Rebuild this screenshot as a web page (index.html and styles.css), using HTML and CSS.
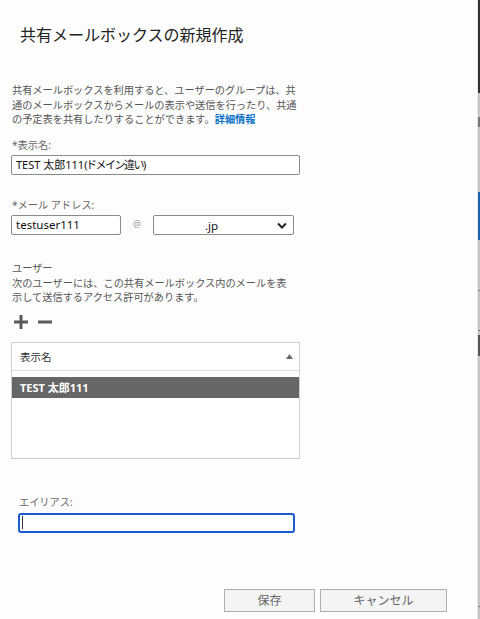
FILE: index.html
```html
<!DOCTYPE html>
<html lang="ja">
<head>
  <meta charset="UTF-8">
  <meta name="viewport" content="width=device-width, initial-scale=1">
  <title>共有メールボックスの新規作成</title>
  <link rel="stylesheet" href="styles.css">
</head>
<body>

  <div class="window">
    <!-- Dialog -->
    <div class="dialog">
      <h1 class="dialog-title">共有メールボックスの新規作成</h1>

      <div class="form">
        <p class="intro">
          共有メールボックスを利用すると、ユーザーのグループは、共<br>
          通のメールボックスからメールの表示や送信を行ったり、共通<br>
          の予定表を共有したりすることができます。<a href="#" class="more">詳細情報</a>
        </p>

        <label class="field-label first">*表示名:</label>
        <div class="text-box wide">TEST 太郎111<span class="narrow">(ドメイン違い)</span></div>

        <label class="field-label gap-email">*メール アドレス:</label>
        <div class="email-row">
          <div class="text-box short">testuser111</div>
          <span class="at">@</span>
          <div class="select-box">
            <span class="domain">.jp</span>
            <svg class="chevron" width="10" height="7" viewBox="0 0 10 7">
              <polyline points="1,1.5 5,5.5 9,1.5" fill="none" stroke="#222" stroke-width="2"/>
            </svg>
          </div>
        </div>

        <div class="users-title">ユーザー</div>
        <p class="users-desc">
          次のユーザーには、この共有メールボックス内のメールを表<br>
          示して送信するアクセス許可があります。
        </p>

        <div class="toolbar">
          <svg width="14" height="14" viewBox="0 0 14 14">
            <rect x="0" y="5.5" width="14" height="3" fill="#5a5a5a"/>
            <rect x="5.5" y="0" width="3" height="14" fill="#5a5a5a"/>
          </svg>
          <svg width="14" height="14" viewBox="0 0 14 14">
            <rect x="0" y="5.5" width="14" height="3" fill="#5a5a5a"/>
          </svg>
        </div>

        <div class="user-list">
          <div class="list-header">
            <span>表示名</span>
            <svg width="7" height="5" viewBox="0 0 7 5">
              <polygon points="0,5 3.5,0 7,5" fill="#6a6a6a"/>
            </svg>
          </div>
          <div class="list-row selected">TEST 太郎111</div>
        </div>

        <div class="alias">
          <label class="field-label">エイリアス:</label>
          <div class="text-box focused"><span class="caret"></span></div>
        </div>
      </div>

      <div class="buttons">
        <button class="btn save">保存</button>
        <button class="btn cancel">キャンセル</button>
      </div>
    </div>

    <!-- edge of the window behind -->
    <div class="edge">
      <div class="seg dark" style="height: 93px"></div>
      <div class="seg" style="height: 24px"></div>
      <div class="seg mid" style="height: 10px"></div>
      <div class="seg" style="height: 65px"></div>
      <div class="seg blue" style="height: 48px"></div>
      <div class="seg" style="height: 50px"></div>
      <div class="seg mid" style="height: 1px"></div>
      <div class="seg" style="height: 39px"></div>
      <div class="seg mid" style="height: 1px"></div>
      <div class="seg" style="height: 4px"></div>
      <div class="seg darkgray" style="height: 21px"></div>
      <div class="seg" style="height: 250px"></div>
      <div class="seg mid" style="height: 1px"></div>
      <div class="seg" style="flex: 1"></div>
    </div>
  </div>

</body>
</html>
```

FILE: styles.css
```css
body {
  margin: 0;
  background: #fff;
  font-family: "Noto Sans", "Noto Sans CJK JP", sans-serif;
  color: #333;
}

.window {
  display: flex;
  width: 480px;
  height: 619px;
}

.dialog {
  flex: 1;
  background: #fdfdfd;
}

/* Title */
.dialog-title {
  margin: 0;
  padding: 25px 0 0 20px;
  font-size: 16px;
  line-height: 20px;
  font-weight: normal;
  color: #222;
}

.form {
  padding-left: 11px;
}

.intro {
  margin: 38px 0 0 1px;
  font-size: 10.2px;
  line-height: 14.7px;
  color: #555;
  white-space: nowrap;
}

.more {
  color: #0a72c8;
  text-decoration: none;
  font-weight: bold;
}

.field-label {
  display: block;
  margin-left: 1px;
  margin-bottom: 2.5px;
  font-size: 10.2px;
  line-height: 15px;
  color: #666;
}

.field-label.first {
  margin-top: 10.5px;
}

.field-label.gap-email {
  margin-top: 22.5px;
}

/* Inputs */
.text-box {
  box-sizing: border-box;
  height: 20px;
  border: 1px solid #8a8a8a;
  border-radius: 2px;
  background: #fff;
  padding: 0 4px;
  font-size: 11px;
  line-height: 18px;
  color: #111;
  white-space: nowrap;
}

.text-box.wide {
  width: 289px;
}

.narrow {
  letter-spacing: -1.5px;
}

.text-box.short {
  width: 110px;
  font-size: 11.5px;
}

.email-row {
  display: flex;
  align-items: center;
}

.at {
  width: 32px;
  text-align: center;
  font-size: 9px;
  color: #999;
  margin-top: -4px;
}

.select-box {
  box-sizing: border-box;
  width: 141px;
  height: 20px;
  border: 1px solid #8a8a8a;
  border-radius: 2px;
  background: #fff;
  display: flex;
  align-items: center;
  justify-content: space-between;
  padding: 0 6px 0 51px;
  font-size: 11.5px;
  color: #111;
}

.chevron {
  display: block;
}

/* Users */
.users-title {
  margin-top: 25.5px;
  margin-left: 1px;
  font-size: 10.2px;
  line-height: 15px;
  color: #555;
}

.users-desc {
  margin: 0 0 0 1px;
  font-size: 10.2px;
  line-height: 14.7px;
  color: #555;
  white-space: nowrap;
}

.toolbar {
  display: flex;
  gap: 10px;
  margin: 9.5px 0 0 3px;
}

.toolbar svg {
  display: block;
}

.user-list {
  box-sizing: border-box;
  margin-top: 13px;
  width: 289px;
  height: 117px;
  border: 1px solid #cfcfcf;
  background: #fff;
}

.list-header {
  height: 27px;
  border-bottom: 1px solid #dcdcdc;
  display: flex;
  align-items: center;
  justify-content: space-between;
  padding: 0 6px 0 8px;
  font-size: 10.5px;
  color: #333;
}

.list-row {
  margin-top: 6px;
  height: 21px;
  line-height: 21px;
  padding-left: 8px;
  font-size: 11px;
}

.list-row.selected {
  background: #666;
  color: #fff;
  font-weight: bold;
}

/* Alias */
.alias {
  margin: 36.5px 0 0 7px;
}

.text-box.focused {
  width: 277px;
  border: 2px solid #1a5ccf;
  border-radius: 3px;
  padding: 1px 0 0 2px;
}

.caret {
  display: block;
  width: 1px;
  height: 13px;
  background: #333;
}

/* Buttons */
.buttons {
  display: flex;
  justify-content: flex-end;
  gap: 5px;
  margin-top: 56px;
  padding-right: 30px;
}

.btn {
  box-sizing: border-box;
  height: 23px;
  border: 1px solid #a9b1b7;
  background: #f4f4f4;
  font-family: "Noto Sans", "Noto Sans CJK JP", sans-serif;
  font-size: 12px;
  color: #666;
  padding: 0;
}

.btn.save {
  width: 91px;
}

.btn.cancel {
  width: 127px;
}

/* Window edge */
.edge {
  width: 2px;
  display: flex;
  flex-direction: column;
  border-left: 1px solid #e8e8e8;
}

.seg {
  background: #c6c6c6;
}

.seg.dark {
  background: #333;
}

.seg.mid {
  background: #777;
}

.seg.darkgray {
  background: #555;
}

.seg.blue {
  background: #1762ae;
}
```
